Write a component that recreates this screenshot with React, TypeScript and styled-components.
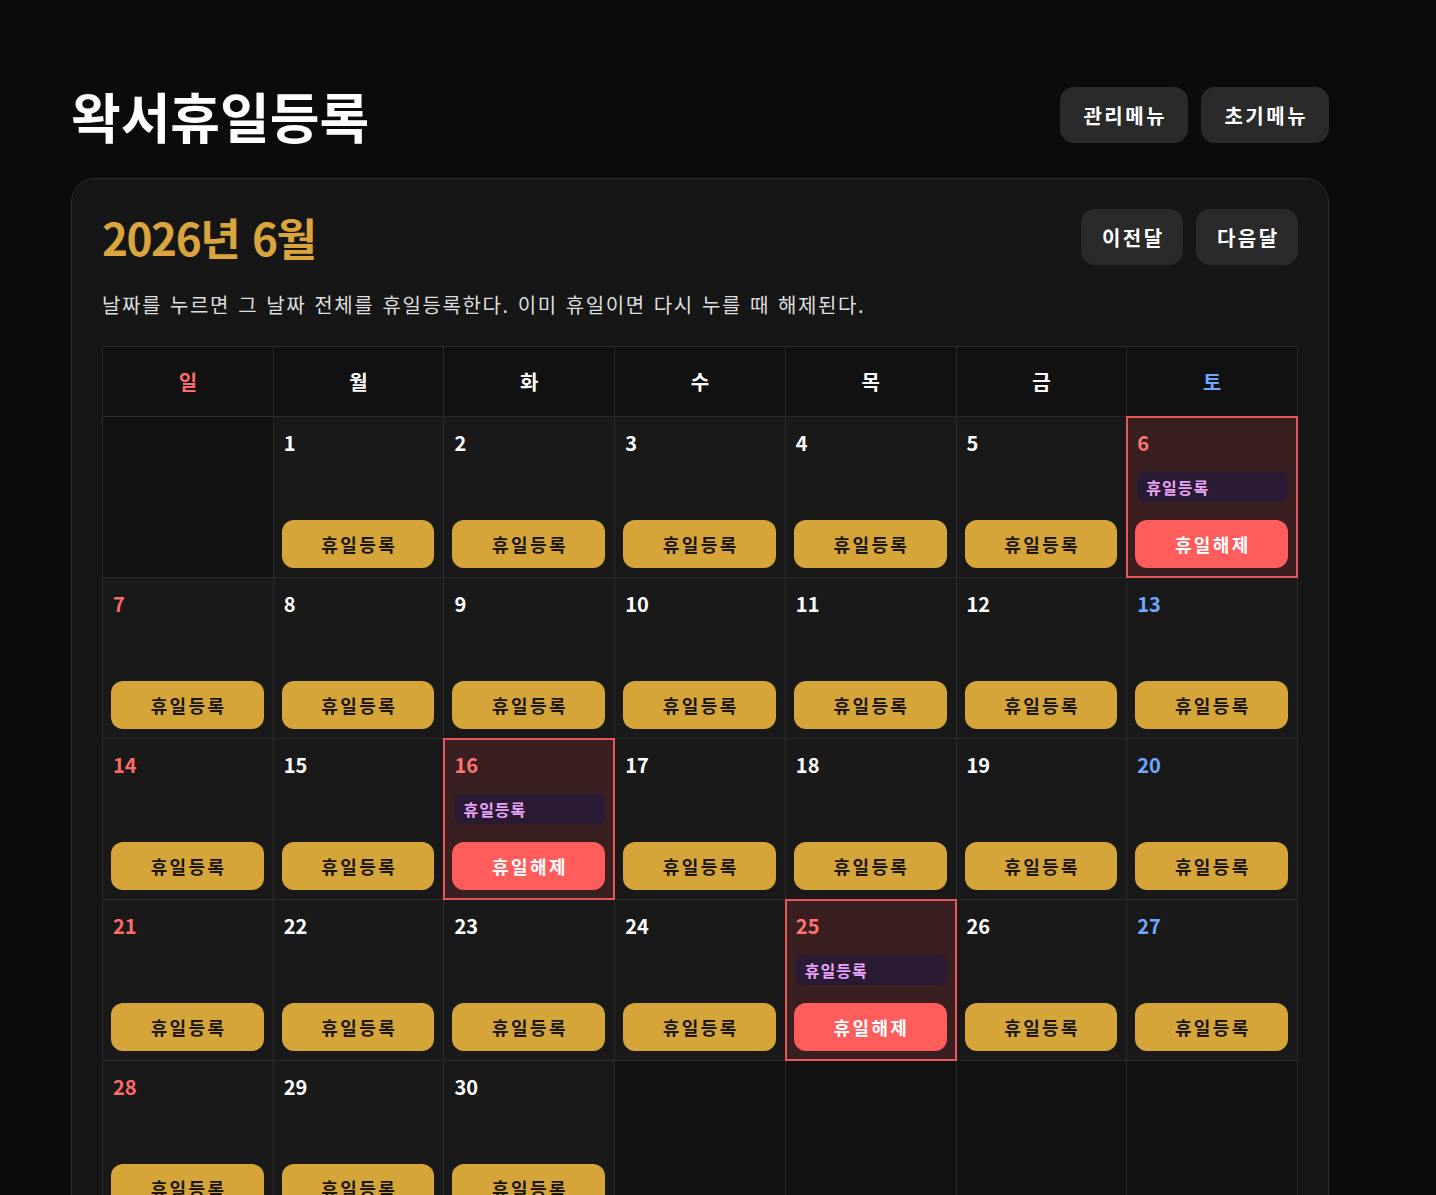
import React, { useState } from "react";
import styled, { createGlobalStyle } from "styled-components";

const GlobalStyle = createGlobalStyle`
  html, body {
    margin: 0;
    padding: 0;
    background: #0b0b0b;
    color: #fff;
    font-family: "Noto Sans CJK KR", "Noto Sans", sans-serif;
  }
`;

const Page = styled.div`
  width: 1258px;
  padding: 87px 0 40px 71px;
`;

const HeaderContainer = styled.div`
  display: flex;
  justify-content: space-between;
  align-items: center;
  height: 56px;
  margin-bottom: 35px;
`;

const PageTitle = styled.h1`
  margin: 0;
  font-size: 54px;
  font-weight: 700;
  color: #fff;
`;

const ButtonGroup = styled.div`
  display: flex;
  gap: 13px;
`;

const DarkButton = styled.button<{ $w: number }>`
  width: ${p => p.$w}px;
  height: 56px;
  border: 0;
  border-radius: 14px;
  background: #2a2a2a;
  color: #fff;
  font-family: inherit;
  font-size: 20px;
  font-weight: 700;
  letter-spacing: 2.5px;
  padding: 0 0 0 2.5px;
  cursor: pointer;
`;

const Card = styled.div`
  background: #161616;
  border: 1px solid #2c2c2c;
  border-radius: 24px;
  padding: 30px 30px 40px;
`;

const MonthRow = styled.div`
  display: flex;
  justify-content: space-between;
  align-items: center;
  height: 56px;
`;

const MonthTitle = styled.h2`
  margin: 0;
  font-size: 44px;
  font-weight: 700;
  letter-spacing: -1.4px;
  word-spacing: 4px;
  color: #d9a53c;
`;

const Notice = styled.p`
  margin: 25px 0 26px;
  font-size: 20px;
  line-height: 30px;
  letter-spacing: 1.6px;
  word-spacing: 2px;
  color: #dedede;
`;

const CalendarGrid = styled.div`
  display: grid;
  grid-template-columns: repeat(7, 1fr);
  gap: 1px;
  background: #2a2a2a;
  border: 1px solid #2a2a2a;
`;

const WeekHead = styled.div<{ $color: string }>`
  height: 69px;
  display: flex;
  align-items: center;
  justify-content: center;
  background: #111;
  color: ${p => p.$color};
  font-size: 20px;
  font-weight: 700;
`;

const DayCell = styled.div<{ $holiday?: boolean }>`
  height: 160px;
  box-sizing: border-box;
  padding: 12px 9px 9px 8px;
  display: flex;
  flex-direction: column;
  background: ${p => (p.$holiday ? "#3a1f20" : "#191919")};
  outline: ${p => (p.$holiday ? "2px solid #e85858" : "none")};
  outline-offset: -1px;
`;

const EmptyCell = styled.div`
  height: 160px;
  background: #111;
`;

const DayNumber = styled.div<{ $color: string }>`
  padding-left: 2px;
  font-size: 20px;
  line-height: 28px;
  font-weight: 700;
  color: ${p => p.$color};
`;

const HolidayBadge = styled.div`
  margin: 15px 0 0 2px;
  height: 30px;
  display: flex;
  align-items: center;
  padding: 0 9px;
  border-radius: 8px;
  background: #2a1a33;
  color: #e7a3f5;
  font-size: 16px;
  font-weight: 700;
  letter-spacing: 1px;
`;

const DayButton = styled.button<{ $release?: boolean }>`
  margin-top: auto;
  height: 48px;
  width: 100%;
  border: 0;
  border-radius: 12px;
  background: ${p => (p.$release ? "#ff5c5c" : "#d5a53a")};
  color: ${p => (p.$release ? "#fff" : "#1b1710")};
  font-family: inherit;
  font-size: 18px;
  font-weight: 700;
  letter-spacing: 2.4px;
  padding: 0 0 0 2.4px;
  cursor: pointer;
`;

const weekDays = [
  { label: "일", color: "#ff6b6b" },
  { label: "월", color: "#fff" },
  { label: "화", color: "#fff" },
  { label: "수", color: "#fff" },
  { label: "목", color: "#fff" },
  { label: "금", color: "#fff" },
  { label: "토", color: "#6fa8ff" },
];

const year = 2026;
const month = 6;

const App = () => {
  const [holidays, setHolidays] = useState<number[]>([6, 16, 25]);

  const firstDay = new Date(year, month - 1, 1).getDay();
  const lastDate = new Date(year, month, 0).getDate();
  const cells: (number | null)[] = [];
  for (let i = 0; i < firstDay; i++) cells.push(null);
  for (let d = 1; d <= lastDate; d++) cells.push(d);
  while (cells.length % 7 !== 0) cells.push(null);

  const toggle = (d: number) => {
    setHolidays(holidays.includes(d) ? holidays.filter(h => h !== d) : [...holidays, d]);
  };

  const numberColor = (d: number, idx: number) => {
    if (holidays.includes(d)) return "#ff7474";
    if (idx % 7 === 0) return "#ff6b6b";
    if (idx % 7 === 6) return "#6fa8ff";
    return "#fff";
  };

  return (
    <>
      <GlobalStyle />
      <Page>
        <HeaderContainer>
          <PageTitle>왁서휴일등록</PageTitle>
          <ButtonGroup>
            <DarkButton $w={128}>관리메뉴</DarkButton>
            <DarkButton $w={128}>초기메뉴</DarkButton>
          </ButtonGroup>
        </HeaderContainer>
        <Card>
          <MonthRow>
            <MonthTitle>{year}년 {month}월</MonthTitle>
            <ButtonGroup>
              <DarkButton $w={102}>이전달</DarkButton>
              <DarkButton $w={102}>다음달</DarkButton>
            </ButtonGroup>
          </MonthRow>
          <Notice>날짜를 누르면 그 날짜 전체를 휴일등록한다. 이미 휴일이면 다시 누를 때 해제된다.</Notice>
          <CalendarGrid>
            {weekDays.map(w => (
              <WeekHead key={w.label} $color={w.color}>{w.label}</WeekHead>
            ))}
            {cells.map((d, idx) => {
              if (d === null) return <EmptyCell key={"e" + idx} />;
              const isHoliday = holidays.includes(d);
              return (
                <DayCell key={d} $holiday={isHoliday}>
                  <DayNumber $color={numberColor(d, idx)}>{d}</DayNumber>
                  {isHoliday && <HolidayBadge>휴일등록</HolidayBadge>}
                  <DayButton $release={isHoliday} onClick={() => toggle(d)}>
                    {isHoliday ? "휴일해제" : "휴일등록"}
                  </DayButton>
                </DayCell>
              );
            })}
          </CalendarGrid>
        </Card>
      </Page>
    </>
  );
};

export default App;
